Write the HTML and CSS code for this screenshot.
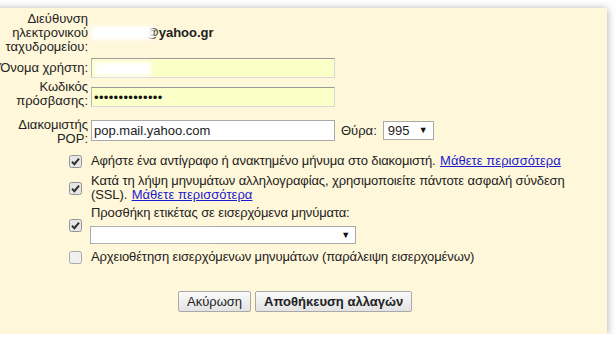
FILE: index.html
```html
<!DOCTYPE html>
<html lang="el">
<head>
  <meta charset="UTF-8" />
  <title>Λογαριασμός POP</title>
  <link rel="stylesheet" href="styles.css">
</head>
<body>

  <div class="panel">
    <div class="form">
      <div class="label row-email">Διεύθυνση ηλεκτρονικού ταχυδρομείου:</div>
      <div class="value row-email"><span class="smudge email-smudge"></span><b>@yahoo.gr</b></div>

      <div class="label">Όνομα χρήστη:</div>
      <div class="value row-user"><span class="field filled"><span class="smudge user-smudge"></span></span></div>

      <div class="label">Κωδικός πρόσβασης:</div>
      <div class="value row-pass"><span class="field filled dots">••••••••••••••</span></div>

      <div class="label row-server-label">Διακομιστής POP:</div>
      <div class="value server">
        <span class="field plain">pop.mail.yahoo.com</span>
        <span class="port-label">Θύρα:</span>
        <span class="select port">995<span class="arrow">▼</span></span>
      </div>

      <div class="check opt-1">
        <svg width="13" height="13" viewBox="0 0 13 13"><rect x="0.5" y="0.5" width="12" height="12" rx="2" fill="#e6e6e6" stroke="#959595"/><path d="M3 6.8 L5.4 9.2 L10 3.6" fill="none" stroke="#333" stroke-width="2"/></svg>
      </div>
      <div class="text opt-1">Αφήστε ένα αντίγραφο ή ανακτημένο μήνυμα στο διακομιστή. <a href="#">Μάθετε περισσότερα</a></div>

      <div class="check opt-2">
        <svg width="13" height="13" viewBox="0 0 13 13"><rect x="0.5" y="0.5" width="12" height="12" rx="2" fill="#e6e6e6" stroke="#959595"/><path d="M3 6.8 L5.4 9.2 L10 3.6" fill="none" stroke="#333" stroke-width="2"/></svg>
      </div>
      <div class="text opt-2">Κατά τη λήψη μηνυμάτων αλληλογραφίας, χρησιμοποιείτε πάντοτε ασφαλή σύνδεση (SSL). <a href="#">Μάθετε περισσότερα</a></div>

      <div class="check opt-3">
        <svg width="13" height="13" viewBox="0 0 13 13"><rect x="0.5" y="0.5" width="12" height="12" rx="2" fill="#e6e6e6" stroke="#959595"/><path d="M3 6.8 L5.4 9.2 L10 3.6" fill="none" stroke="#333" stroke-width="2"/></svg>
      </div>
      <div class="text opt-3">
        Προσθήκη ετικέτας σε εισερχόμενα μηνύματα:
        <span class="select label-select"><span class="smudge label-smudge"></span><span class="arrow">▼</span></span>
      </div>

      <div class="check opt-4">
        <svg width="13" height="13" viewBox="0 0 13 13"><rect x="0.5" y="0.5" width="12" height="12" rx="2" fill="#f0f0f0" stroke="#a8a8a8"/></svg>
      </div>
      <div class="text opt-4">Αρχειοθέτηση εισερχόμενων μηνυμάτων (παράλειψη εισερχομένων)</div>
    </div>

    <div class="buttons">
      <button type="button">Ακύρωση</button>
      <button type="button" class="primary">Αποθήκευση αλλαγών</button>
    </div>
  </div>

</body>
</html>
```

FILE: styles.css
```css
* {
  box-sizing: border-box;
}

body {
  margin: 0;
  padding: 0;
  background: #ffffff;
  font-family: "Liberation Sans", Arial, sans-serif;
  font-size: 13px;
  line-height: 14px;
  color: #222222;
  overflow: hidden;
}

.panel {
  margin: 8px 9px 0 -10px;
  height: 326px;
  padding-top: 1px;
  background: #fff7d9;
  box-shadow: 0 1px 8px rgba(0, 0, 0, 0.35);
}

.form {
  display: grid;
  grid-template-columns: 98px 500px;
  column-gap: 3px;
  align-items: center;
}

.label {
  text-align: right;
}

.row-email {
  padding: 3px 0;
}

.value b {
  font-weight: bold;
}

.row-user {
  padding: 1px 0;
}

.row-pass {
  padding: 8px 0 1px;
}

.row-server-label {
  padding-top: 5px;
}

.server {
  display: flex;
  align-items: center;
  padding: 12px 0 9px;
}

/* blurred-out personal data */
.smudge {
  display: inline-block;
  background: #ffffff;
  filter: blur(2px);
  vertical-align: middle;
}

.email-smudge {
  width: 62px;
  height: 14px;
  margin-right: -7px;
  position: relative;
  z-index: 1;
}

.user-smudge {
  width: 56px;
  height: 14px;
  margin-top: 1px;
}

.label-smudge {
  width: 120px;
  height: 12px;
}

.field {
  display: block;
  width: 244px;
  height: 20px;
  padding: 2px 3px;
  border: 1px solid #d8d8d8;
  border-top-color: #9a9a9a;
  border-left-color: #b8b8b8;
}

.filled {
  background: #fbffc8;
}

.dots {
  letter-spacing: 0.35px;
  line-height: 15px;
  padding-left: 2px;
  color: #111111;
}

.plain {
  height: 21px;
  background: #ffffff;
  border: 1px solid #a9a9a9;
  padding: 3px 2px;
  line-height: 13px;
}

.port-label {
  margin-left: 6px;
  margin-right: 6px;
}

.select {
  display: flex;
  align-items: center;
  position: relative;
  background: #ffffff;
  border: 1px solid #a9a9a9;
  padding: 0 4px;
}

.port {
  width: 51px;
  height: 19px;
}

.label-select {
  width: 266px;
  height: 18px;
  margin: 6px 0 0 -1px;
}

.arrow {
  position: absolute;
  right: 5px;
  top: 3px;
  font-size: 9px;
  line-height: 10px;
  color: #111111;
}

.check {
  justify-self: end;
  margin-right: 6px;
  height: 13px;
}

.check svg {
  display: block;
}

.text {
  padding: 2px 0;
  letter-spacing: -0.12px;
}

.text a {
  color: #1a1ad0;
  margin-left: 1px;
  letter-spacing: 0.05px;
}

.opt-1 {
  margin-top: 2px;
}

.opt-2 {
  margin-top: 2px;
}

.opt-3 {
  margin-top: 0;
}

.opt-4 {
  margin-top: 2px;
}

.buttons {
  display: flex;
  gap: 4px;
  margin-top: 25px;
  padding-left: 188px;
}

.buttons button {
  font-family: "Liberation Sans", Arial, sans-serif;
  font-size: 13px;
  color: #222222;
  height: 21px;
  padding: 0 8px;
  border: 1px solid #a9a9a9;
  border-radius: 2px;
  background: linear-gradient(#fafafa, #e3e3e3);
}

.buttons .primary {
  font-weight: bold;
}
```
